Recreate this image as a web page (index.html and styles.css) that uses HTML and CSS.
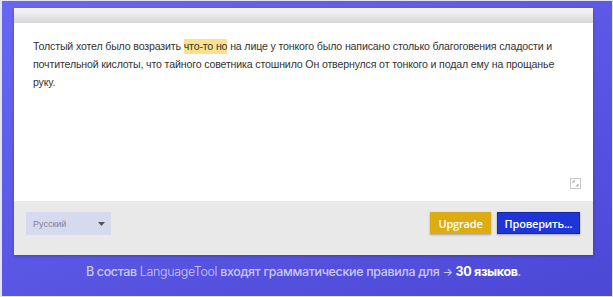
FILE: index.html
```html
<!DOCTYPE html>
<html lang="ru">
<head>
    <meta charset="UTF-8">
    <meta name="viewport" content="width=device-width, initial-scale=1.0">
    <title>LanguageTool</title>
    <link rel="stylesheet" href="styles.css">
</head>
<body>
    <div class="frame">
        <div class="card">
            <div class="card-top"></div>
            <div class="editor">
                <p class="editor-text">Толстый хотел было возразить <span class="mark">что-то но</span> на лице у тонкого было написано столько благоговения сладости и почтительной кислоты, что тайного советника стошнило Он отвернулся от тонкого и подал ему на прощанье руку.</p>
                <span class="resize">
                    <svg width="11" height="11" viewBox="0 0 11 11">
                        <rect x="0.5" y="0.5" width="10" height="10" fill="none" stroke="#c8c8c8"/>
                        <path d="M3 5V3h2M8 6v2H6" fill="none" stroke="#9a9a9a"/>
                    </svg>
                </span>
            </div>
            <div class="card-footer">
                <div class="lang-select">
                    <span>Русский</span>
                    <svg width="7" height="4" viewBox="0 0 7 4"><path d="M0 0h7L3.5 4z" fill="#555"/></svg>
                </div>
                <div class="actions">
                    <button class="btn btn-upgrade">Upgrade</button>
                    <button class="btn btn-check">Проверить...</button>
                </div>
            </div>
        </div>
        <p class="note">В состав <span class="brand">LanguageTool</span> входят грамматические правила для <span class="arrow">→</span> <b>30 языков</b>.</p>
    </div>
</body>
</html>
```

FILE: styles.css
```css
body {
    margin: 0;
    font-family: "Liberation Sans", Arial, sans-serif;
}
.frame {
    width: 613px;
    height: 297px;
    box-sizing: border-box;
    border: 1px solid #e4e4ee;
    border-left-width: 2px;
    background: linear-gradient(160deg, #6a66f4 0%, #5a56e4 55%, #4c48d6 100%);
    padding: 7px 19px 0 12px;
    overflow: hidden;
}
.card {
    background: #fff;
    box-shadow: 0 1px 3px rgba(0, 0, 0, 0.25);
}
.card-top {
    height: 15px;
    background: linear-gradient(#f6f6f6, #d8d8d8);
}
.editor {
    position: relative;
    height: 178px;
    padding: 14px 19px 0 19px;
    box-sizing: border-box;
}
.editor-text {
    margin: 0;
    font-size: 10.6px;
    letter-spacing: -0.15px;
    line-height: 18px;
    color: #333;
}
.mark {
    display: inline-block;
    line-height: 15px;
    background: #fde18c;
}
.resize {
    position: absolute;
    right: 12px;
    bottom: 12px;
    line-height: 0;
}
.card-footer {
    background: #e9e9e9;
    height: 54px;
    box-sizing: border-box;
    padding: 11px 13px 0 12px;
    display: flex;
    justify-content: space-between;
    align-items: flex-start;
}
.lang-select {
    width: 85px;
    height: 23px;
    box-sizing: border-box;
    background: #d6daef;
    padding: 0 6px 0 7px;
    display: flex;
    align-items: center;
    justify-content: space-between;
    font-size: 9px;
    color: #818191;
}
.actions {
    display: flex;
    gap: 6px;
}
.btn {
    height: 22px;
    border: none;
    color: #fff;
    font-family: "Open Sans", Arial, sans-serif;
    font-size: 11px;
    font-weight: 600;
    letter-spacing: -0.2px;
    padding: 0;
    box-shadow: 0 1px 2px rgba(0, 0, 0, 0.3);
}
.btn-upgrade {
    width: 61px;
    background: #ddab12;
}
.btn-check {
    width: 83px;
    background: #1e36d8;
    border: 1px solid #1526a8;
}
.note {
    margin: 9px 0 0;
    text-align: center;
    font-family: Inter, Arial, sans-serif;
    font-size: 12.5px;
    font-weight: 500;
    letter-spacing: -0.35px;
    color: #c9c8f6;
}
.brand {
    font-weight: 300;
}
.arrow {
    font-size: 11px;
}
.note b {
    color: #fff;
    font-weight: 700;
}
```
